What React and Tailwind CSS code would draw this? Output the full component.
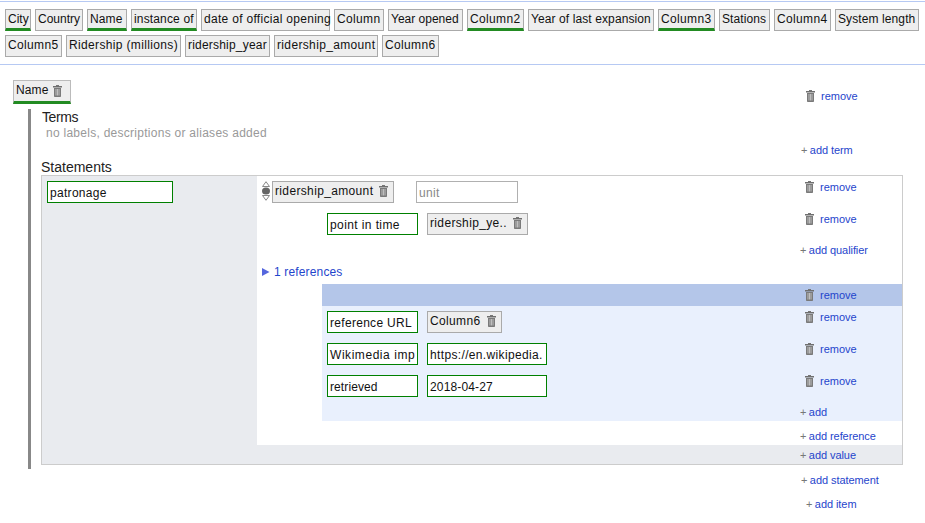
const chipsA = [
  ["City", "w-[26px]", true, "tracking-[0px]"],
  ["Country", "w-[48px]", false, "tracking-[0px]"],
  ["Name", "w-[40px]", true, "tracking-[0.1px]"],
  ["instance of", "w-[66px]", true, "tracking-[0.15px]"],
  ["date of official opening", "w-[129px]", false, "tracking-[0.3px]"],
  ["Column", "w-[50px]", false, "tracking-[0.35px]"],
  ["Year opened", "w-[75px]", false, "tracking-[0px]"],
  ["Column2", "w-[57px]", true, "tracking-[0.35px]"],
  ["Year of last expansion", "w-[126px]", false, "tracking-[0.1px]"],
  ["Column3", "w-[57px]", true, "tracking-[0.35px]"],
  ["Stations", "w-[51px]", false, "tracking-[0.1px]"],
  ["Column4", "w-[57px]", false, "tracking-[0.35px]"],
  ["System length", "w-[84px]", false, "tracking-[0.1px]"],
];
const chipsB = [
  ["Column5", "w-[57px]", false, "tracking-[0.35px]"],
  ["Ridership (millions)", "w-[115px]", false, "tracking-[0.35px]"],
  ["ridership_year", "w-[85px]", false, "tracking-[0.2px]"],
  ["ridership_amount", "w-[104px]", false, "tracking-[0.35px]"],
  ["Column6", "w-[57px]", false, "tracking-[0.35px]"],
];

function Trash({ className = "" }) {
  return (
    <svg width="9" height="12" viewBox="0 0 9 12" className={className}>
      <rect x="3" y="0" width="3" height="1" fill="#777" />
      <rect x="0" y="1" width="9" height="1.5" fill="#6f6f6f" />
      <path d="M1 3h7v8.2a.8.8 0 0 1-.8.8H1.8a.8.8 0 0 1-.8-.8z" fill="#7a7a7a" />
      <path d="M3 4v6.5M4.5 4v6.5M6 4v6.5" stroke="#dcdcdc" strokeWidth="0.7" />
    </svg>
  );
}

function Chip({ label, w, green, track }) {
  return (
    <div className={`${w} ${track} h-[22px] bg-[#eeeeee] border border-[#aaaaaa] pl-[2px] text-[12px] leading-[18px] text-[#111] whitespace-nowrap ${green ? "border-b-[3px] border-b-[#228b22]" : ""}`}>
      {label}
    </div>
  );
}

function ValueChip({ label, w }) {
  return (
    <div className={`${w} h-[22px] bg-[#eeeeee] border border-[#aaaaaa] pl-[2px] pr-[5px] flex items-start text-[12px] tracking-[0.35px] leading-[18px] text-[#111] whitespace-nowrap`}>
      <span>{label}</span>
      <Trash className="ml-auto mt-[3px] shrink-0" />
    </div>
  );
}

function Field({ label, w, green = true, muted, track = "tracking-[0.3px]" }) {
  return (
    <div className={`${w} ${track} h-[22px] border pl-[2px] text-[12px] leading-[22px] whitespace-nowrap bg-white ${green ? "border-[#008000]" : "border-[#b0b0b0]"} ${muted ? "text-[#888]" : "text-[#111]"}`}>
      {label}
    </div>
  );
}

function Remove({ w = "w-[97px]" }) {
  return (
    <div className={`${w} shrink-0 flex items-center h-[12px] text-[11px] leading-[12px] text-[#1f45cc]`}>
      <Trash />
      <span className="ml-[6px]">remove</span>
    </div>
  );
}

function Add({ label, w }) {
  return (
    <div className={`${w} shrink-0 h-[16px] text-[11px] tracking-[-0.07px] leading-[16px] text-[#1f45cc] whitespace-nowrap`}>
      <span className="text-[#777777]">+</span>
      <span className="ml-[2.5px]">{label}</span>
    </div>
  );
}

function Row({ className = "", children }) {
  return <div className={`flex justify-between items-start ${className}`}>{children}</div>;
}

export default function App() {
  return (
    <div className="w-[925px] h-[523px] overflow-hidden bg-white font-['Liberation_Sans',Arial,sans-serif]">
      <div className="mt-px border-t border-b border-[#b6c9f3] h-[64px] px-[5px] pt-[7px] flex flex-col gap-[4px]">
        <div className="flex gap-[4px]">
          {chipsA.map(([l, w, g, t]) => <Chip key={l} label={l} w={w} green={g} track={t} />)}
        </div>
        <div className="flex gap-[4px]">
          {chipsB.map(([l, w, g, t]) => <Chip key={l} label={l} w={w} green={g} track={t} />)}
        </div>
      </div>

      <div className="pl-[13px] pt-[15px]">
        <div className="flex justify-between items-start pr-[21px]">
          <div className="w-[58px] h-[24px] bg-[#eeeeee] border border-[#bbbbbb] border-b-[3px] border-b-[#228b22] pl-[2px] flex items-start text-[12px] tracking-[0.1px] leading-[19px] text-[#111]">
            <span>Name</span>
            <Trash className="ml-[5px] mt-[4px]" />
          </div>
          <div className="mt-[10px]"><Remove w="w-[98px]" /></div>
        </div>

        <div className="ml-[15px] mt-[5px] w-[875px] border-l-[3px] border-[#888888] pl-[10px] pb-[4px]">
          <div className="ml-px h-[16px] text-[14px] tracking-[-0.4px] leading-[16px] text-[#222]">Terms</div>
          <div className="ml-[5px] h-[16px] text-[12px] leading-[16px] tracking-[0.27px] text-[#999]">no labels, descriptions or aliases added</div>
          <div className="mt-px flex justify-end"><Add label="add term" w="w-[102px]" /></div>
          <div className="mt-px h-[16px] text-[14px] leading-[16px] text-[#222]">Statements</div>

          <div className="w-[862px] h-[290px] border border-[#cccccc] bg-[#e9ebef] flex flex-col">
            <div className="flex h-[269px]">
              <div className="w-[215px] shrink-0 pl-[5px] pt-[5px]">
                <Field label="patronage" w="w-[126px]" />
              </div>
              <div className="flex-1 bg-white flex flex-col">
                <Row className="pt-[5px] pl-[5px] h-[27px]">
                  <div className="flex">
                    <svg width="8" height="20" viewBox="0 0 8 20">
                      <path d="M4 .7 7.5 5.5H.5z" fill="#fff" stroke="#888" strokeWidth="1" />
                      <ellipse cx="4" cy="10" rx="4" ry="3.6" fill="#666" />
                      <path d="M4 19.3 7.5 14.5H.5z" fill="#fff" stroke="#888" strokeWidth="1" />
                    </svg>
                    <div className="ml-[2px]"><ValueChip label="ridership_amount" w="w-[122px]" /></div>
                    <div className="ml-[22px]"><Field label="unit" w="w-[102px]" green={false} muted /></div>
                  </div>
                  <Remove />
                </Row>
                <Row className="mt-[10px] pl-[70px] h-[22px]">
                  <div className="flex gap-[9px]">
                    <Field label="point in time" w="w-[91px]" track="tracking-[0.4px]" />
                    <ValueChip label="ridership_ye.." w="w-[101px]" />
                  </div>
                  <Remove />
                </Row>
                <div className="mt-[7px] flex justify-end"><Add label="add qualifier" w="w-[102px]" /></div>
                <div className="mt-[6px] h-[16px] pl-[5px] flex items-center text-[12px] tracking-[0.15px] leading-[16px] text-[#1f45cc]">
                  <svg width="8" height="8" viewBox="0 0 8 8"><path d="M0 0 7.5 4 0 8z" fill="#5566dd" /></svg>
                  <span className="ml-[4px]">1 references</span>
                </div>
                <div className="mt-[4px] ml-[65px] flex flex-col">
                  <div className="h-[22px] bg-[#b4c6e9] flex justify-end items-center"><Remove /></div>
                  <div className="h-[115px] bg-[#e9f0fd] pt-[5px] flex flex-col">
                    <Row className="pl-[5px] h-[22px]">
                      <div className="flex gap-[9px]">
                        <Field label="reference URL" w="w-[91px]" />
                        <ValueChip label="Column6" w="w-[75px]" />
                      </div>
                      <Remove />
                    </Row>
                    <Row className="mt-[10px] pl-[5px] h-[22px]">
                      <div className="flex gap-[9px]">
                        <Field label="Wikimedia imp" w="w-[91px]" track="tracking-[0.55px]" />
                        <Field label="https://en.wikipedia." w="w-[120px]" track="tracking-[0.35px]" />
                      </div>
                      <Remove />
                    </Row>
                    <Row className="mt-[10px] pl-[5px] h-[22px]">
                      <div className="flex gap-[9px]">
                        <Field label="retrieved" w="w-[91px]" track="tracking-[0.1px]" />
                        <Field label="2018-04-27" w="w-[120px]" track="tracking-[0.15px]" />
                      </div>
                      <Remove />
                    </Row>
                    <div className="mt-[7px] flex justify-end"><Add label="add" w="w-[102px]" /></div>
                  </div>
                </div>
                <div className="mt-[7px] flex justify-end"><Add label="add reference" w="w-[102px]" /></div>
              </div>
            </div>
            <div className="mt-[2px] flex justify-end"><Add label="add value" w="w-[102px]" /></div>
          </div>
        </div>

        <div className="mt-[3px] ml-[788px]"><Add label="add statement" w="w-[124px]" /></div>
        <div className="mt-[8px] ml-[793px]"><Add label="add item" w="w-[119px]" /></div>
      </div>
    </div>
  );
}
